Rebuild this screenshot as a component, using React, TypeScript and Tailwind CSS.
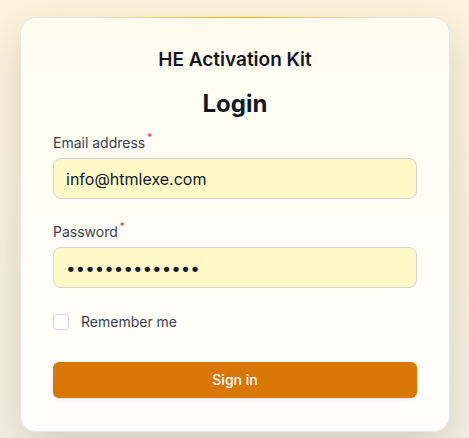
import React, { useState } from "react";

const font = { fontFamily: "Inter, 'Noto Sans', sans-serif" };

const Label: React.FC<{ text: string }> = ({ text }) => (
  <label className="flex items-start text-sm leading-5 text-[#374151]">
    {text}
    <span className="ml-[2px] -mt-[4px] text-[10px] leading-4 text-[#e11d48]">*</span>
  </label>
);

const App: React.FC = () => {
  const [remember, setRemember] = useState(false);

  return (
    <div
      className="min-h-[438px] w-full bg-gradient-to-b from-[#fcf4dc] to-[#f6f1e4] pt-[17px] pb-2 pl-5 pr-[19px]"
      style={font}
    >
      <div className="relative w-[430px] rounded-2xl border border-[#e5e7eb] bg-gradient-to-b from-[#fffcee] to-[#fffefb] px-8 pt-7 pb-[33px] shadow-[0_18px_45px_rgba(60,50,30,0.18)]">
        {/* accent line on top edge */}
        <div className="absolute -top-px left-16 right-16 h-px bg-gradient-to-r from-transparent via-[#f5b100] to-transparent" />

        <h2 className="text-center text-[19px] font-semibold leading-7 text-[#111827]">
          HE Activation Kit
        </h2>
        <h1 className="mt-[14px] text-center text-2xl font-bold leading-8 text-[#111827]">
          Login
        </h1>

        <form className="mt-[13px] flex flex-col" onSubmit={(e) => e.preventDefault()}>
          <Label text="Email address" />
          <input
            type="email"
            defaultValue="info@htmlexe.com"
            className="mt-[5px] h-[41px] w-full rounded-lg border border-[#d1d5db] bg-[#fefac7] px-3 text-base text-[#111827] outline-none"
          />

          <div className="mt-[23px]">
            <Label text="Password" />
          </div>
          <input
            type="password"
            defaultValue="12345678901234"
            className="mt-[5px] h-[41px] w-full rounded-lg border border-[#d1d5db] bg-[#fefac7] px-3 text-[17px] text-[#111827] outline-none"
          />

          <label className="mt-[24px] flex items-center gap-3 text-sm leading-5 text-[#374151]">
            <input
              type="checkbox"
              checked={remember}
              onChange={() => setRemember(!remember)}
              className="h-4 w-4 appearance-none rounded border border-[#d1d5db] bg-white"
            />
            Remember me
          </label>

          <button
            type="submit"
            className="mt-[30px] h-9 w-full rounded-md bg-[#d97706] text-sm font-medium text-white shadow-sm"
          >
            Sign in
          </button>
        </form>
      </div>
    </div>
  );
};

export default App;
